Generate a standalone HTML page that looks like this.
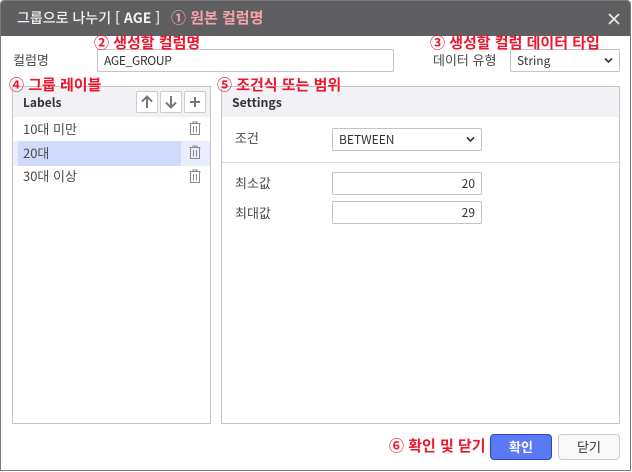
<!DOCTYPE html>
<html lang="ko">
<head>
<meta charset="utf-8">
<style>
html,body{margin:0;padding:0;width:632px;height:472px;overflow:hidden;background:#fff}
body{font-family:"Noto Sans CJK KR","Liberation Sans",sans-serif;font-size:13px;color:#4a4a4a;position:relative}
.a{position:absolute;white-space:nowrap;line-height:16px}
.box{position:absolute;box-sizing:border-box;background:#fff;border:1px solid #c4c4c4;border-radius:2px}
.red{position:absolute;white-space:nowrap;color:#f0142d;font-weight:700;font-size:15px;line-height:18px}
.tb{position:absolute;box-sizing:border-box;width:22px;height:22px;top:91px;background:#fff;border:1px solid #ccc;border-radius:2px}
.tb svg,.tr svg{display:block}
.tr{position:absolute;left:188px;width:14px;height:16px}
.val{position:absolute;white-space:nowrap;line-height:16px;color:#333;font-size:12px}
</style>
</head>
<body>
<div style="position:absolute;left:0;top:0;width:631px;height:471px;box-sizing:border-box;border:1px solid #7a7a7a;border-radius:4px 4px 0 0;background:#fff"></div>
<div style="position:absolute;left:1px;top:1px;width:629px;height:35px;background:#5f5f61;border-radius:3px 3px 0 0"></div>
<div class="a" style="left:17px;top:10px;color:#f2f2f2;font-size:14px;font-weight:500;line-height:17px">그룹으로 나누기 [ <b>AGE</b> ]</div>
<div class="red" style="left:171px;top:9px;color:#f7a3ab">① 원본 컬럼명</div>
<svg style="position:absolute;left:608px;top:13px" width="12" height="12" viewBox="0 0 12 12"><path d="M1 1L11 11M11 1L1 11" stroke="#e8e8e8" stroke-width="1.800"/></svg>

<div class="a" style="left:13px;top:52px">컬럼명</div>
<div class="box" style="left:97px;top:49px;width:297px;height:23px"></div>
<div class="val" style="left:104px;top:53px;letter-spacing:-.3px">AGE_GROUP</div>
<div class="a" style="left:433px;top:52px">데이터 유형</div>
<div class="box" style="left:510px;top:49px;width:110px;height:23px"></div>
<div class="val" style="left:517px;top:53px">String</div>
<svg style="position:absolute;left:604px;top:57px" width="9" height="7" viewBox="0 0 9 7"><path d="M1 1.500L4.500 5L8 1.500" fill="none" stroke="#333" stroke-width="1.600"/></svg>

<div class="red" style="left:94px;top:34px">② 생성할 컬럼명</div>
<div class="red" style="left:430px;top:34px">③ 생성할 컬럼 데이터 타입</div>

<!-- left panel -->
<div class="box" style="left:12px;top:86px;width:199px;height:338px;border-radius:0"></div>
<div style="position:absolute;left:13px;top:87px;width:197px;height:30px;background:#f1f1f6"></div>
<div class="a" style="left:23px;top:95px;font-weight:700;font-size:12px;color:#333">Labels</div>
<div class="tb" style="left:136px"><svg width="20" height="20" viewBox="0 0 20 20"><path d="M10 16V4.500M5 9.500L10 4.500L15 9.500" fill="none" stroke="#777" stroke-width="2"/></svg></div>
<div class="tb" style="left:160px"><svg width="20" height="20" viewBox="0 0 20 20"><path d="M10 4V15.500M5 10.500L10 15.500L15 10.500" fill="none" stroke="#777" stroke-width="2"/></svg></div>
<div class="tb" style="left:184px"><svg width="20" height="20" viewBox="0 0 20 20"><path d="M10 5V15M5 10H15" fill="none" stroke="#777" stroke-width="2"/></svg></div>

<div style="position:absolute;left:13px;top:141px;width:197px;height:25px;background:#e9edfd"></div>
<div style="position:absolute;left:18px;top:141px;width:163px;height:25px;background:#d0dbfb"></div>
<div class="a" style="left:23px;top:121px">10대 미만</div>
<div class="a" style="left:23px;top:145px">20대</div>
<div class="a" style="left:23px;top:168px">30대 이상</div>
<div class="tr" style="top:121px"><svg width="14" height="16" viewBox="0 0 14 16"><path d="M1.500 2.500H12.500M5 2.500V1H9V2.500M2.500 2.500V13.500H11.500V2.500M5.500 5V11.500M8.500 5V11.500" fill="none" stroke="#8a8a8a" stroke-width="1"/></svg></div>
<div class="tr" style="top:145px"><svg width="14" height="16" viewBox="0 0 14 16"><path d="M1.500 2.500H12.500M5 2.500V1H9V2.500M2.500 2.500V13.500H11.500V2.500M5.500 5V11.500M8.500 5V11.500" fill="none" stroke="#8a8a8a" stroke-width="1"/></svg></div>
<div class="tr" style="top:169px"><svg width="14" height="16" viewBox="0 0 14 16"><path d="M1.500 2.500H12.500M5 2.500V1H9V2.500M2.500 2.500V13.500H11.500V2.500M5.500 5V11.500M8.500 5V11.500" fill="none" stroke="#8a8a8a" stroke-width="1"/></svg></div>

<!-- right panel -->
<div class="box" style="left:221px;top:86px;width:399px;height:338px;border-radius:0"></div>
<div style="position:absolute;left:222px;top:87px;width:397px;height:30px;background:#f1f1f6"></div>
<div class="a" style="left:232px;top:94px;font-weight:700;font-size:12.300px;color:#333">Settings</div>
<div class="a" style="left:235px;top:130px">조건</div>
<div class="box" style="left:332px;top:128px;width:150px;height:23px"></div>
<div class="val" style="left:339px;top:132px">BETWEEN</div>
<svg style="position:absolute;left:466px;top:136px" width="9" height="7" viewBox="0 0 9 7"><path d="M1 1.500L4.500 5L8 1.500" fill="none" stroke="#333" stroke-width="1.600"/></svg>
<div style="position:absolute;left:222px;top:162px;width:397px;height:1px;background:#ddd"></div>
<div class="a" style="left:235px;top:175px">최소값</div>
<div class="box" style="left:332px;top:172px;width:150px;height:23px"></div>
<div class="val" style="right:157px;top:176px">20</div>
<div class="a" style="left:235px;top:205px">최대값</div>
<div class="box" style="left:332px;top:201px;width:150px;height:23px"></div>
<div class="val" style="right:157px;top:205px">29</div>

<div class="red" style="left:9px;top:76px">④ 그룹 레이블</div>
<div class="red" style="left:217px;top:76px">⑤ 조건식 또는 범위</div>
<div class="red" style="left:389px;top:437px">⑥ 확인 및 닫기</div>

<div class="box" style="left:490px;top:434px;width:62px;height:26px;background:#5c79f5;border-color:#2a45c8;border-radius:4px"></div>
<div class="a" style="left:490px;top:439px;width:62px;text-align:center;color:#fff;font-weight:700">확인</div>
<div class="box" style="left:558px;top:434px;width:62px;height:26px;background:#f8f8f8;border-color:#ccc;border-radius:4px"></div>
<div class="a" style="left:558px;top:439px;width:62px;text-align:center;color:#333">닫기</div>
</body>
</html>
